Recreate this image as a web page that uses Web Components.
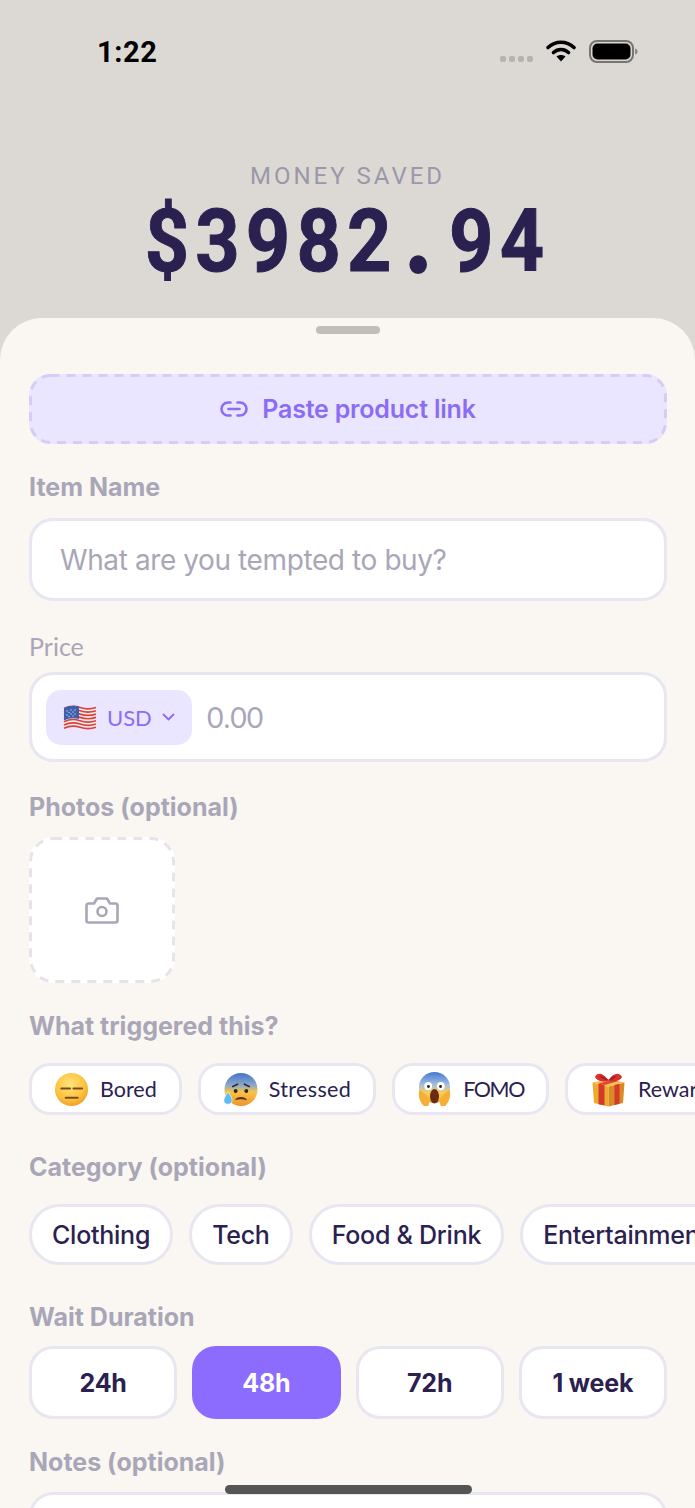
<!DOCTYPE html>
<html lang="en">
<head>
<meta charset="UTF-8">
<title>Money Saved</title>
<style>
  html, body { margin: 0; padding: 0; background: #dcd9d5; }
  body { width: 695px; height: 1508px; overflow: hidden; font-family: "Inter", "Liberation Sans", sans-serif; }
</style>
</head>
<body>
<app-screen>
  <status-bar slot="top"></status-bar>
  <money-header slot="top"></money-header>

  <link-button>Paste product link</link-button>

  <field-label bold gap="26" after="14">Item Name</field-label>
  <text-field placeholder="What are you tempted to buy?"></text-field>

  <field-label gap="28" after="9">Price</field-label>
  <price-field></price-field>

  <field-label bold gap="28" after="13">Photos (optional)</field-label>
  <photo-slot></photo-slot>

  <field-label bold gap="26" after="20">What triggered this?</field-label>
  <chip-row>
    <emoji-chip label="Bored" icon="bored"></emoji-chip>
    <emoji-chip label="Stressed" icon="stressed" spacing=".35"></emoji-chip>
    <emoji-chip label="FOMO" icon="fomo" spacing="-1.4"></emoji-chip>
    <emoji-chip label="Reward" icon="gift"></emoji-chip>
  </chip-row>

  <field-label bold gap="35" after="20">Category (optional)</field-label>
  <chip-row>
    <pill-chip>Clothing</pill-chip>
    <pill-chip>Tech</pill-chip>
    <pill-chip>Food &amp; Drink</pill-chip>
    <pill-chip>Entertainment</pill-chip>
  </chip-row>

  <field-label bold gap="35" after="12">Wait Duration</field-label>
  <duration-row>
    <duration-option>24h</duration-option>
    <duration-option selected>48h</duration-option>
    <duration-option>72h</duration-option>
    <duration-option>1 week</duration-option>
  </duration-row>

  <field-label bold gap="26" after="13">Notes (optional)</field-label>
  <notes-field></notes-field>

  <home-indicator slot="overlay"></home-indicator>
</app-screen>

<script>
  // small helper, every element just sets its shadow html once
  function shadow(el, html) {
    el.attachShadow({ mode: 'open' }).innerHTML = html;
  }

  const ICONS = {
    bored: `<svg viewBox="0 0 36 36" width="35" height="35">
      <defs><radialGradient id="f" cx=".45" cy=".35" r=".75"><stop offset="0" stop-color="#ffe57a"/><stop offset=".6" stop-color="#fbc23f"/><stop offset="1" stop-color="#ee8f1f"/></radialGradient></defs>
      <circle cx="18" cy="18" r="17" fill="url(#f)"/>
      <path d="M7.500 17h9M20 17h9" stroke="#7a4c18" stroke-width="2" stroke-linecap="round"/>
      <path d="M12 26.500h12.500" stroke="#7a4c18" stroke-width="2" stroke-linecap="round"/>
    </svg>`,
    stressed: `<svg viewBox="0 0 36 36" width="35" height="35">
      <defs><linearGradient id="s" x1="0" y1="0" x2="0" y2="1"><stop offset="0" stop-color="#3f74cf"/><stop offset=".38" stop-color="#8fa9c6"/><stop offset=".58" stop-color="#f8c546"/><stop offset="1" stop-color="#ef932a"/></linearGradient></defs>
      <circle cx="18.500" cy="18" r="17" fill="url(#s)"/>
      <path d="M10 15l5-2.500M27 15l-5-2.500" stroke="#2f2a3a" stroke-width="1.700" stroke-linecap="round"/>
      <circle cx="13" cy="19.500" r="2" fill="#33241a"/><circle cx="24" cy="19.500" r="2" fill="#33241a"/>
      <path d="M12.500 29c1-4.500 11-4.500 12 0c-3.500-1.200-8.500-1.200-12 0z" fill="#5b2f1a"/>
      <path d="M5 20.500c2.300 3.500 4.300 5.500 4.300 8.300a4.200 4.200 0 0 1-8.400 .2c0-2.600 2.300-5 4.100-8.500z" fill="#5fbcf0" stroke="#fff" stroke-width=".6"/>
    </svg>`,
    fomo: `<svg viewBox="0 0 36 36" width="35" height="36">
      <defs><linearGradient id="o" x1="0" y1="0" x2="0" y2="1"><stop offset="0" stop-color="#3f78d8"/><stop offset=".42" stop-color="#a7c0dc"/><stop offset=".68" stop-color="#f9cf55"/><stop offset="1" stop-color="#f3a52e"/></linearGradient></defs>
      <circle cx="18" cy="16.500" r="16" fill="url(#o)"/>
      <ellipse cx="11.500" cy="15" rx="4" ry="4.300" fill="#fff"/><ellipse cx="24.500" cy="15" rx="4" ry="4.300" fill="#fff"/>
      <circle cx="11.800" cy="15.500" r="1.500" fill="#2b2018"/><circle cx="24.200" cy="15.500" r="1.500" fill="#2b2018"/>
      <ellipse cx="18" cy="25.500" rx="4.600" ry="7.500" fill="#6a2c14"/>
      <path d="M2.500 19c-1.500 6 0 12 4.500 16.500h4.500c1.500-3 1-6.500-1-9.500c-1.500-2.800-4.500-5.200-8-7z" fill="#f6ae36"/>
      <path d="M33.500 19c1.500 6 0 12-4.500 16.500h-4.500c-1.500-3-1-6.500 1-9.500c1.500-2.800 4.500-5.200 8-7z" fill="#f6ae36"/>
    </svg>`,
    gift: `<svg viewBox="0 0 36 36" width="37" height="36">
      <path d="M2 11.500l16 4v20l-14.500-3.500z" fill="#eeaa2e"/>
      <path d="M34 11.500l-16 4v20l14.500-3.500z" fill="#d98b22"/>
      <path d="M2 11.500l16 4 16-4-16-3.500z" fill="#f5c04a"/>
      <path d="M8 12.600l6 1.500v20.500l-6-1.400zM24 14.100l5-1.300v20l-5 1.300z" fill="#d23a2c"/>
      <path d="M8 12.600l14-3.800 6 1.300-14 4z" fill="#e0463a"/>
      <path d="M4.500 6c2-4.500 7-5 13.500 3c5-7.500 11-8 13.500-3c-1.500 4-8.500 5.500-13.500 3.500c-5 2-12 .5-13.500-3.500z" fill="#d5302e"/>
      <path d="M9 5c3 0 6.500 2 9 4.500c2-2.500 5-4.500 8-4.500c-1.500 2.500-5 4-8 4.500c-3-.5-7-2-9-4.500z" fill="#9c1f22"/>
    </svg>`
  };

  // css dashes are too short at this width, so the dashed boxes get an svg outline
  function dashed(w, h, r, color) {
    return `<svg style="position:absolute;left:0;top:0" width="${w}" height="${h}" fill="none">
      <rect x="1.500" y="1.500" width="${w - 3}" height="${h - 3}" rx="${r}" stroke="${color}" stroke-width="3" stroke-dasharray="9 7"/>
    </svg>`;
  }

  class AppScreen extends HTMLElement {
    constructor() {
      super();
      shadow(this, `
        <style>
          :host { display: block; width: 695px; height: 1508px; position: relative; overflow: hidden; background: #dcd9d5; }
          .sheet {
            margin-top: 37px; height: 1190px; box-sizing: border-box;
            background: #faf6f2; border-radius: 42px 42px 0 0;
            padding: 8px 28px 0 29px;
            display: flex; flex-direction: column;
          }
          .handle { width: 64px; height: 8px; border-radius: 4px; background: #c0bdba; align-self: center; margin-bottom: 40px; flex: none; }
        </style>
        <slot name="top"></slot>
        <div class="sheet">
          <div class="handle"></div>
          <slot></slot>
        </div>
        <slot name="overlay"></slot>`);
    }
  }

  class StatusBar extends HTMLElement {
    constructor() {
      super();
      shadow(this, `
        <style>
          :host { display: flex; height: 105px; box-sizing: border-box; padding: 33px 57px 0 97px; justify-content: space-between; align-items: flex-start; }
          .time { font: 700 29px/38px "Roboto", "Liberation Sans", sans-serif; color: #000; letter-spacing: .6px; }
          .icons { display: flex; align-items: center; gap: 13px; height: 36px; }
          .dots { display: flex; gap: 3px; margin-top: 15px; }
          .dots i { width: 6px; height: 6px; border-radius: 2px; background: #b5b3b0; display: block; }
        </style>
        <div class="time">1:22</div>
        <div class="icons">
          <div class="dots"><i></i><i></i><i></i><i></i></div>
          <svg width="30" height="22" viewBox="0 0 30 22">
            <path d="M2 7.500C9.500 .5 20.500 .5 28 7.500" fill="none" stroke="#000" stroke-width="3.600" stroke-linecap="round"/>
            <path d="M7.500 12.500c4.500-4 10.500-4 15 0" fill="none" stroke="#000" stroke-width="3.600" stroke-linecap="round"/>
            <path d="M10.500 16.500c2.500-2 6.500-2 9 0L15 21.500z" fill="#000"/>
          </svg>
          <svg width="49" height="23" viewBox="0 0 49 23">
            <rect x="1" y="1" width="43" height="21" rx="7" fill="none" stroke="#77756f" stroke-width="2"/>
            <rect x="3.500" y="3.500" width="38" height="16" rx="5" fill="#000"/>
            <path d="M46 8.500c2 .6 2.600 1.600 2.600 3s-.6 2.400-2.600 3z" fill="#8b8984"/>
          </svg>
        </div>`);
    }
  }

  class MoneyHeader extends HTMLElement {
    constructor() {
      super();
      shadow(this, `
        <style>
          :host { display: flex; flex-direction: column; align-items: center; height: 176px; box-sizing: border-box; padding-top: 56px; }
          .cap { font: 400 24px/30px "Roboto", "Liberation Sans", sans-serif; letter-spacing: 3px; color: #9a98a8; }
          /* digits in the shot are narrow and spaced out, no condensed font here so squeeze it */
          .amt { font: 700 88px/80px "Roboto", "Liberation Sans", sans-serif; letter-spacing: 7px; color: #2a2150; margin-top: 10px;
            white-space: nowrap; transform: scaleX(.88); -webkit-text-stroke: 1px #2a2150; }
          .dot { -webkit-text-stroke: 6px #2a2150; margin: 0 15px 0 11px; }
        </style>
        <div class="cap">MONEY SAVED</div>
        <div class="amt">$3982<span class="dot">.</span>94</div>`);
    }
  }

  class LinkButton extends HTMLElement {
    constructor() {
      super();
      shadow(this, `
        <style>
          :host { display: flex; position: relative; align-items: center; justify-content: center; gap: 14px; height: 70px; box-sizing: border-box; flex: none;
            background: #ebe6ff; border-radius: 21px;
            font: 600 25px/30px "Inter", "Liberation Sans", sans-serif; color: #8b6cf5; letter-spacing: -.2px; }
        </style>
        ${dashed(638, 70, 20, '#d6ccf8')}
        <svg width="28" height="18" viewBox="0 0 28 18" fill="none" stroke="#8b6cf5" stroke-width="2.600" stroke-linecap="round">
          <path d="M10.500 2.500H8a6.500 6.500 0 0 0 0 13h2.500"/>
          <path d="M17.500 2.500H20a6.500 6.500 0 0 1 0 13h-2.500"/>
          <path d="M8.500 9h11"/>
        </svg>
        <slot></slot>`);
    }
  }

  class FieldLabel extends HTMLElement {
    constructor() {
      super();
      const bold = this.hasAttribute('bold');
      const font = bold ? '700 25px/34px "Inter"' : '400 25px/34px "Lato"';
      shadow(this, `
        <style>
          :host { display: block; flex: none; height: 34px;
            margin-top: ${this.getAttribute('gap') || 0}px; margin-bottom: ${this.getAttribute('after') || 14}px;
            font: ${font}, "Liberation Sans", sans-serif; color: #a9a6b8; }
        </style>
        <slot></slot>`);
    }
  }

  class TextField extends HTMLElement {
    constructor() {
      super();
      shadow(this, `
        <style>
          :host { display: flex; align-items: center; flex: none; height: 83px; box-sizing: border-box; background: #fff;
            border: 3px solid #e8e6f0; border-radius: 24px; padding-left: 28px;
            font: 400 28px/34px "Inter", "Liberation Sans", sans-serif; color: #a9a6b8; letter-spacing: -.4px; }
        </style>
        <span>${this.getAttribute('placeholder')}</span>`);
    }
  }

  class PriceField extends HTMLElement {
    constructor() {
      super();
      // wavy stripes for the flag emoji
      let stripes = '';
      for (let i = 0; i < 7; i++) {
        const y = 3.5 + i * 3.3;
        stripes += `<path d="M1 ${y + 1}c6-3 10-3 16-1s10 2 16 0" fill="none" stroke="#dc3f3c" stroke-width="1.700"/>`;
      }
      shadow(this, `
        <style>
          :host { display: flex; align-items: center; flex: none; height: 90px; box-sizing: border-box; background: #fff;
            border: 3px solid #e8e6f0; border-radius: 24px; padding-left: 14px; gap: 15px;
            font-family: "Lato", "Liberation Sans", sans-serif; }
          .sel { display: flex; align-items: center; width: 146px; height: 55px; box-sizing: border-box; padding-left: 17px; background: #ebe6ff; border-radius: 15px;
            color: #8b6cf5; font-size: 22px; }
          .cur { margin-left: 10px; }
          .chev { margin-left: 10px; }
          .val { font-size: 28.500px; color: #a9a6b8; }
        </style>
        <div class="sel">
          <svg width="34" height="26" viewBox="0 0 34 26">
            <path d="M1 4c6-3 10-3 16-1s10 2 16 0v20c-6 2-10 2-16 0s-10-2-16 1z" fill="#f3eeee"/>
            ${stripes}
            <path d="M1 4c5-2.500 10-2.800 15-1.400v12.400c-5-1.400-10-1.100-15 1.400z" fill="#3d5fae"/>
            <g fill="#c4d2ef">
              <circle cx="4" cy="7" r=".7"/><circle cx="8" cy="6" r=".7"/><circle cx="12" cy="6" r=".7"/>
              <circle cx="4" cy="11" r=".7"/><circle cx="8" cy="10" r=".7"/><circle cx="12" cy="10" r=".7"/>
              <circle cx="6" cy="8.500" r=".7"/><circle cx="10" cy="8" r=".7"/><circle cx="6" cy="12.500" r=".7"/><circle cx="10" cy="12" r=".7"/>
            </g>
          </svg>
          <span class="cur">USD</span>
          <svg class="chev" width="13" height="8" viewBox="0 0 13 8" fill="none" stroke="#8b6cf5" stroke-width="1.800" stroke-linecap="round" stroke-linejoin="round"><path d="M1.500 1.500l5 5 5-5"/></svg>
        </div>
        <span class="val">0.00</span>`);
    }
  }

  class PhotoSlot extends HTMLElement {
    constructor() {
      super();
      shadow(this, `
        <style>
          :host { display: flex; position: relative; align-items: center; justify-content: center; flex: none; width: 146px; height: 146px; box-sizing: border-box;
            background: #fff; border-radius: 24px; }
        </style>
        ${dashed(146, 146, 23, '#e6e4e9')}
        <svg width="34" height="30" viewBox="0 0 34 30" fill="none" stroke="#a9a6b8" stroke-width="2.600" stroke-linejoin="round">
          <path d="M3.500 8.500h5.500l3-5h10l3 5h5.500a2 2 0 0 1 2 2v15a2 2 0 0 1-2 2h-27a2 2 0 0 1-2-2v-15a2 2 0 0 1 2-2z"/>
          <circle cx="17" cy="16.500" r="4.500"/>
        </svg>`);
    }
  }

  class ChipRow extends HTMLElement {
    constructor() {
      super();
      shadow(this, `
        <style>
          :host { display: flex; flex: none; gap: 16px; margin-right: -60px; }
        </style>
        <slot></slot>`);
    }
  }

  class EmojiChip extends HTMLElement {
    constructor() {
      super();
      shadow(this, `
        <style>
          :host { display: flex; align-items: center; flex: none; height: 52px; box-sizing: border-box; gap: 11px; padding: 0 22px; background: #fff;
            border: 3px solid #e8e6f0; border-radius: 21px;
            font: 400 21.500px/28px "Lato", "Liberation Sans", sans-serif; color: #2a2150; white-space: nowrap;
            letter-spacing: ${this.getAttribute('spacing') || 0}px; }
          svg { display: block; flex: none; }
        </style>
        ${ICONS[this.getAttribute('icon')]}
        <span>${this.getAttribute('label')}</span>`);
    }
  }

  class PillChip extends HTMLElement {
    constructor() {
      super();
      shadow(this, `
        <style>
          :host { display: flex; align-items: center; flex: none; height: 61px; box-sizing: border-box; padding: 0 20px; background: #fff;
            border: 3px solid #e8e6f0; border-radius: 31px;
            font: 500 25px/30px "Inter", "Liberation Sans", sans-serif; color: #2a2150; letter-spacing: -.25px; white-space: nowrap; }
        </style>
        <slot></slot>`);
    }
  }

  class DurationRow extends HTMLElement {
    constructor() {
      super();
      shadow(this, `
        <style>
          :host { display: grid; flex: none; grid-template-columns: repeat(4, 1fr); gap: 15px; }
        </style>
        <slot></slot>`);
    }
  }

  class DurationOption extends HTMLElement {
    constructor() {
      super();
      const on = this.hasAttribute('selected');
      shadow(this, `
        <style>
          :host { display: flex; align-items: center; justify-content: center; height: 73px; box-sizing: border-box;
            background: ${on ? '#8b6cff' : '#fff'}; border: 3px solid ${on ? '#8b6cff' : '#e8e6f0'}; border-radius: 24px;
            font: 700 25px/30px "Inter", "Liberation Sans", sans-serif; color: ${on ? '#fff' : '#2a2150'}; letter-spacing: -.2px; }
        </style>
        <slot></slot>`);
    }
  }

  class NotesField extends HTMLElement {
    constructor() {
      super();
      shadow(this, `
        <style>
          :host { display: block; flex: none; height: 120px; box-sizing: border-box; background: #fff; border: 3px solid #e8e6f0; border-radius: 24px; }
        </style>`);
    }
  }

  class HomeIndicator extends HTMLElement {
    constructor() {
      super();
      shadow(this, `
        <style>
          :host { display: block; position: absolute; left: 225px; bottom: 14px; width: 247px; height: 9px; border-radius: 5px; background: #555; }
        </style>`);
    }
  }

  customElements.define('app-screen', AppScreen);
  customElements.define('status-bar', StatusBar);
  customElements.define('money-header', MoneyHeader);
  customElements.define('link-button', LinkButton);
  customElements.define('field-label', FieldLabel);
  customElements.define('text-field', TextField);
  customElements.define('price-field', PriceField);
  customElements.define('photo-slot', PhotoSlot);
  customElements.define('chip-row', ChipRow);
  customElements.define('emoji-chip', EmojiChip);
  customElements.define('pill-chip', PillChip);
  customElements.define('duration-row', DurationRow);
  customElements.define('duration-option', DurationOption);
  customElements.define('notes-field', NotesField);
  customElements.define('home-indicator', HomeIndicator);
</script>
</body>
</html>
